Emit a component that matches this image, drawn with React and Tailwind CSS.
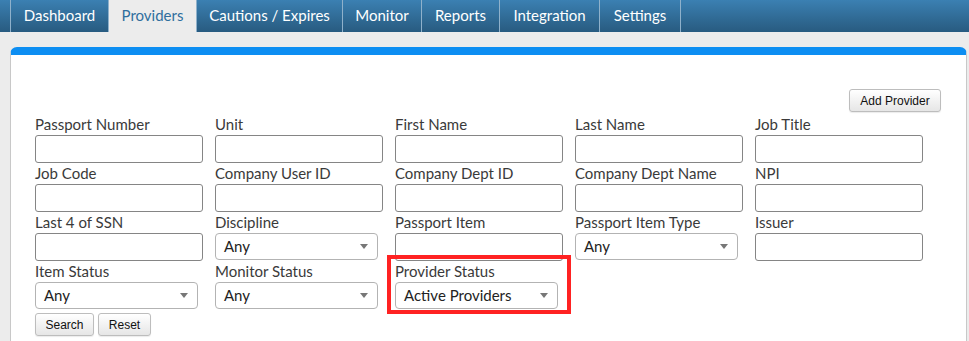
import React from 'react';

const tabs = [
  { name: 'Dashboard', w: 'w-[99px]' },
  { name: 'Providers', w: 'w-[88px]' },
  { name: 'Cautions / Expires', w: 'w-[146px]' },
  { name: 'Monitor', w: 'w-[79px]' },
  { name: 'Reports', w: 'w-[78px]' },
  { name: 'Integration', w: 'w-[100px]' },
  { name: 'Settings', w: 'w-[81px]' },
];

const fields = [
  { label: 'Passport Number' },
  { label: 'Unit' },
  { label: 'First Name' },
  { label: 'Last Name' },
  { label: 'Job Title' },
  { label: 'Job Code' },
  { label: 'Company User ID' },
  { label: 'Company Dept ID' },
  { label: 'Company Dept Name' },
  { label: 'NPI' },
  { label: 'Last 4 of SSN' },
  { label: 'Discipline', select: 'Any' },
  { label: 'Passport Item' },
  { label: 'Passport Item Type', select: 'Any' },
  { label: 'Issuer' },
  { label: 'Item Status', select: 'Any' },
  { label: 'Monitor Status', select: 'Any' },
  { label: 'Provider Status', select: 'Active Providers', highlight: true },
];

const Select = ({ value }) => (
  <div className="flex items-center justify-between h-[27px] w-[163px] border border-[#b3b3b3] rounded-[4px] bg-white pl-[8px] pr-[9px] text-[15px] text-[#222]">
    <span>{value}</span>
    <span className="w-0 h-0 border-l-[4px] border-r-[4px] border-t-[5px] border-l-transparent border-r-transparent border-t-[#777]" />
  </div>
);

const Field = ({ field }) => (
  <div className="relative">
    {field.highlight && (
      <div className="absolute -left-[8px] -top-[6px] -bottom-[5px] -right-[8px] border-[4px] border-[#ff2222] pointer-events-none" />
    )}
    <div className="h-[21px] leading-[21px] text-[15px] text-[#3a3a3a]">{field.label}</div>
    {field.select ? (
      <Select value={field.select} />
    ) : (
      <div className="h-[28px] w-[168px] border border-[#858585] rounded-[3px] bg-white" />
    )}
  </div>
);

const Btn = ({ children, className = '' }) => (
  <button
    className={`h-[23px] border border-[#bdbdbd] rounded-[3px] bg-gradient-to-b from-white to-[#e6e6e6] text-[12px] text-[#111] font-['Liberation_Sans',Arial,sans-serif] shadow-[0_1px_1px_rgba(0,0,0,0.08)] ${className}`}
  >
    {children}
  </button>
);

export default function App() {
  return (
    <div className="min-h-screen bg-[#ececec] font-['Lato','Noto_Sans',sans-serif]">
      <nav className="h-[32px] bg-gradient-to-b from-[#3b80b2] to-[#285b80] flex pl-[10px]">
        {tabs.map((t, i) => {
          const active = t.name === 'Providers';
          return (
            <div
              key={t.name}
              className={`h-full flex items-center justify-center pb-[2px] text-[15px] border-r border-[#8fb1cb] ${t.w} ${i === 0 ? 'border-l' : ''} ${
                active ? 'bg-[#ececec] text-[#2f6e9e]' : 'text-white'
              }`}
            >
              {t.name}
            </div>
          );
        })}
      </nav>

      <div className="pt-[15px] pl-[10px] pr-[2px]">
        <div className="bg-white border-t-[8px] border-t-[#0d8ef2] border-x border-x-[#c8c8c8] rounded-t-[7px] pl-[24px] pr-[25px] pt-[34px] pb-[10px]">
          <div className="flex justify-end">
            <Btn className="w-[92px]">Add Provider</Btn>
          </div>
          <div className="mt-[2px] grid grid-cols-[168px_168px_168px_168px_168px] gap-x-[12px]">
            {fields.map((f) => (
              <Field key={f.label} field={f} />
            ))}
          </div>
          <div className="flex gap-[4px] mt-[4px]">
            <Btn className="w-[59px]">Search</Btn>
            <Btn className="w-[53px]">Reset</Btn>
          </div>
        </div>
      </div>
    </div>
  );
}
